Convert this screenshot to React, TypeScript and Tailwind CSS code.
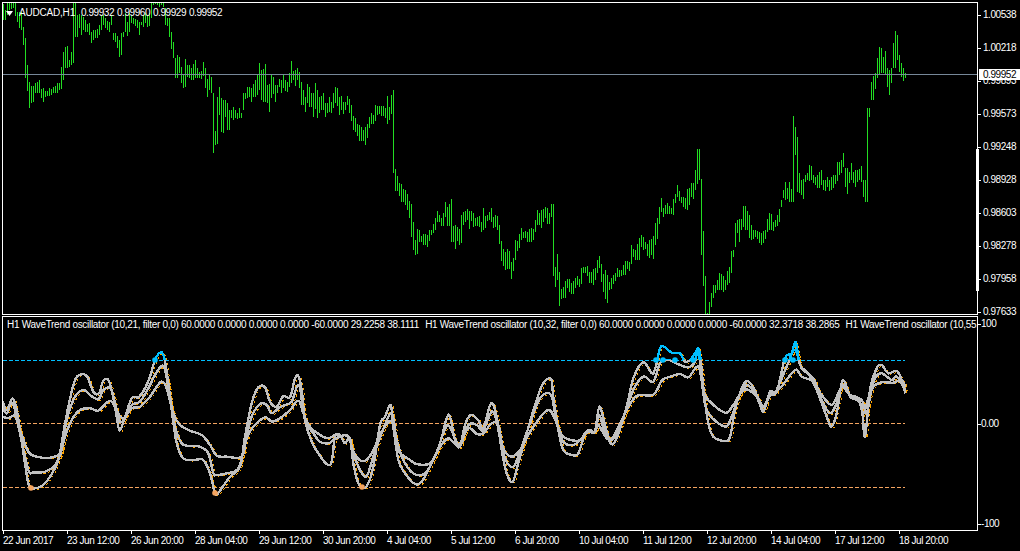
const seg1 = [
  [12,60],[30,60],[10,45],[10,30],[8,28],[8,25],[10,48],[35,65],[35,85],[35,90],
  [80,135],[115,235],[195,272],[245,323],[258,310],[258,305],[250,280],[245,280],[240,278],[268,295],
  [265,305],[272,290],[272,288],[265,288],[268,285],[262,280],[258,280],[250,280],[248,270],[200,268],
  [155,240],[140,205],[138,205],[180,200],[155,195],[8,190],[8,112],[45,112],[42,85],[45,105],
  [50,90],[60,95],[72,95],[70,105],[95,130],[90,120],[90,115],[88,115],[75,105],[45,90],
  [45,75],[55,85],[62,90],[65,95],[45,75],[100,120],[100,125],[108,145],[120,170],[100,165],
  [95,112],[40,95],[65,108],[40,95],[45,70],[55,72],[58,78],[60,85],[65,105],[65,75],
  [45,80],[40,70],[45,80],[40,78],[8,55],[8,15],[8,12],[8,14],[8,20],[8,15],
  [8,22],[25,75],[55,78],[55,110],[95,148],[125,175],[175,235],[165,235],[170,218],[200,248],
  [225,265],[178,262],[195,232],[195,235],[205,240],[192,240],[180,235],[205,235],[215,235],[212,238],
  [185,228],[205,265],[238,290],[225,270],[230,280],[280,458],[392,435],[290,432],[262,345],[295,395],
  [300,398],[300,350],[310,390],[330,390],[330,355],[320,360],[330,355],[340,358],[325,355],[340,355],
  [280,330],[278,298],[262,295],[262,290],[265,305],[252,290],[240,290],[225,285],[190,270],[210,300],
  [208,305],[192,305],[255,310],[252,335],[225,295],[232,282],[255,305],[255,280],[238,262],[240,280],
  [225,265],[240,272],[245,275],[220,262],[183,250],[212,240],[210,258],[205,240],[215,265],[245,315],
  [270,315],[290,335],[252,310],[262,320],[280,320],[278,352],[250,328],[270,355],[290,340],[288,330],
  [280,330],[310,352],[310,340],[292,335],[305,340],[280,325],[262,310],[265,318],[290,345],
];

// y offset 80 in this one
const seg2 = [
  [48,90],[65,102],[65,90],[48,75],[57,100],[75,123],[108,150],[113,155],[132,167],[135,183],
  [140,183],[150,183],[140,195],[132,175],[110,145],[98,132],[105,133],[75,123],[78,105],[78,103],
  [78,108],[78,108],[84,115],[48,132],[80,120],[45,102],[30,278],[267,333],[288,333],[308,348],
  [312,365],[327,367],[330,375],[342,390],[363,415],[372,470],[426,510],[480,525],[447,522],[450,487],
  [468,487],[462,495],[462,495],[465,500],[450,483],[450,465],[432,458],[414,450],[393,427],[405,427],
  [414,438],[400,438],[366,412],[380,438],[372,438],[357,486],[437,486],[435,507],[441,483],[447,495],
  [405,489],[396,435],[393,427],[387,420],[393,447],[393,423],[399,441],[415,438],[411,438],[408,441],
  [426,456],[384,450],[408,444],[405,423],[396,420],[384,426],[411,444],[405,441],[408,450],[435,492],
  [483,543],[507,558],[516,570],[507,567],[513,567],[546,597],[534,573],[480,540],[483,513],[462,504],
  [444,480],[456,474],[453,474],[456,486],[447,486],[444,486],[447,480],[420,456],[390,435],[399,435],
  [390,444],[387,426],[381,414],[384,432],[400,432],[372,411],[372,588],[561,621],[522,600],[576,678],
  [627,657],[621,654],[603,654],[597,624],[597,636],[609,642],[603,642],[594,624],[588,615],[597,621],
  [564,612],[561,579],[561,579],[558,588],[576,609],[576,609],[567,615],[564,600],[540,579],[528,564],
  [552,606],[582,636],[570,657],[585,669],[606,630],[594,627],[585,612],[579,603],[564,591],[570,591],
  [570,588],[555,585],[543,585],[543,567],[546,573],[495,552],[507,531],[510,540],[492,540],[474,540],
  [465,501],[471,510],[486,507],[492,528],[480,534],[477,525],[468,537],[429,495],[414,477],[381,432],
  [354,396],[384,411],[375,402],[369,402],[378,402],[384,402],[357,405],[342,369],[315,351],[333,363],
];

const seg3 = [
  [591,609],[591,621],[594,627],[567,630],[565,615],[549,590],[549,597],[510,570],[447,552],[447,540],
  [537,765],[693,858],[828,945],[940,960],[905,945],[880,920],[855,895],[855,880],[840,870],[819,870],
  [822,870],[828,875],[840,870],[813,855],[800,850],[753,820],[750,770],[669,740],[660,700],[657,726],
  [657,690],[618,680],[618,690],[633,690],[645,715],[675,720],[690,716],[690,712],[692,718],[695,730],
  [700,735],[692,730],[690,718],[657,695],[640,690],[642,690],[665,693],[660,680],[645,678],[627,665],
  [600,622],[570,595],[546,600],[565,598],[545,605],[568,605],[348,605],[380,465],[410,575],[520,580],
  [540,585],[537,597],[525,545],[518,540],[495,543],[498,540],[525,550],[530,555],[525,565],[515,565],
  [510,555],[540,570],[540,572],[530,560],[540,572],[532,570],[525,565],[526,553],[485,543],[485,525],
  [480,520],[458,500],[505,560],[505,582],[515,550],[490,540],[515,548],[510,560],[510,545],[507,540],
  [497,545],[540,590],[540,605],[325,605],[325,350],[245,300],[228,300],[218,268],[173,233],[140,225],
  [145,220],[172,218],[152,222],[205,260],[210,285],[205,250],[128,205],[93,205],[105,180],[165,215],
  [190,230],[205,243],[218,235],
];

function barPath() {
  const d: string[] = [];
  const add = (rows: number[][], startX: number, yOff: number) => {
    rows.forEach(([t, b], i) => {
      const x = startX + i * 2 + 0.5;
      d.push(`M${x} ${Math.round(yOff + t / 3)}V${Math.round(yOff + b / 3)}`);
    });
  };
  add(seg1, 3, 0);
  add(seg2, 341, 80);
  add(seg3, 681, 0);
  return d.join("");
}

// oscillator points, read off in 3x crops: [x, y] with x offset per crop and y = 310 + y/3
type Pts = number[][];
const crop = (pts: Pts, off: number) => pts.map(([x, y]) => [off + x / 3, 310 + y / 3]);

const outer = [
  ...crop([[8,275],[20,300],[38,265],[50,300],[60,360],[72,440],[85,520],[95,535],[125,528],[150,500],[175,450],[190,370],[205,290],[225,210],[245,193],[262,200],[280,245],[297,250],[310,212],[328,215],[345,290],[358,360],[372,330],[395,265],[415,262],[435,235],[450,200],[465,150],[480,128],[492,140],[505,220],[515,300],[530,400],[550,445],[580,450],[610,450],[630,490],[640,530],[648,555],[665,535],[690,500],[720,470],[735,380],[755,280],[775,232],[795,232],[810,275],[830,290],[850,258],[870,262],[885,205],[895,198],[905,240],[915,330],[935,395],[955,430],[980,462],[995,455],[1005,380]], 0),
  ...crop([[0,375],[15,400],[30,385],[40,460],[55,520],[70,535],[85,520],[100,470],[120,345],[135,320],[152,285],[160,350],[175,450],[195,490],[225,522],[245,515],[270,470],[300,400],[320,325],[330,320],[345,390],[360,410],[375,345],[392,315],[415,330],[430,355],[453,280],[470,320],[485,420],[500,490],[518,515],[535,460],[560,370],[590,270],[610,220],[633,207],[640,260],[655,360],[670,420],[695,435],[715,430],[735,370],[750,360],[765,365],[778,290],[795,345],[812,400],[830,385],[860,290],[880,205],[910,157],[940,190],[960,115],[975,112],[995,128]], 340),
  ...crop([[0,130],[15,155],[30,150],[45,130],[55,115],[62,150],[72,250],[85,340],[100,380],[135,393],[150,380],[165,300],[185,235],[200,213],[215,225],[235,265],[250,305],[270,245],[290,245],[315,145],[335,130],[347,97],[360,165],[385,190],[410,240],[440,320],[455,350],[470,310],[488,212],[510,260],[530,270],[545,290],[555,380],[570,240],[590,175],[605,165],[625,190],[650,183],[665,210],[676,250]], 680),
];

const mid = [
  ...crop([[8,290],[20,310],[38,280],[60,370],[85,480],[100,487],[135,485],[165,465],[185,420],[200,330],[225,260],[250,240],[270,255],[295,268],[310,240],[333,237],[350,300],[360,335],[375,325],[395,285],[420,275],[445,235],[465,195],[485,168],[495,180],[510,260],[525,350],[545,400],[570,408],[600,410],[625,430],[640,490],[650,495],[680,490],[715,475],[735,400],[755,320],[780,282],[800,285],[815,310],[835,295],[855,285],[875,275],[890,232],[900,235],[915,330],[940,370],[960,395],[985,400],[1000,390]], 0),
  ...crop([[0,380],[25,378],[40,430],[60,480],[80,498],[100,440],[125,370],[155,310],[170,390],[190,450],[220,490],[255,490],[285,440],[310,370],[325,345],[345,385],[360,410],[385,345],[410,345],[430,360],[455,305],[470,335],[490,430],[515,472],[535,440],[570,340],[600,265],[633,255],[650,340],[670,395],[700,405],[725,385],[740,365],[765,365],[778,315],[795,370],[815,390],[840,350],[880,240],[910,200],[940,215],[960,160],[985,150]], 340),
  ...crop([[0,165],[25,172],[45,155],[55,118],[70,250],[85,310],[135,350],[155,320],[175,265],[200,225],[225,250],[250,300],[270,250],[285,250],[320,170],[345,120],[365,175],[400,205],[425,270],[450,310],[470,280],[488,225],[510,255],[535,265],[550,310],[565,265],[585,205],[605,190],[635,210],[650,200],[676,240]], 680),
];

const inner = [
  ...crop([[8,320],[25,325],[45,318],[60,360],[85,425],[110,440],[150,443],[180,430],[195,380],[215,330],[240,300],[270,295],[295,302],[320,278],[335,275],[355,310],[370,325],[395,295],[420,290],[450,260],[470,230],[485,215],[500,235],[520,310],[540,345],[570,362],[605,375],[630,405],[650,437],[680,440],[725,440],[740,385],[760,350],[795,322],[815,335],[840,325],[870,300],[895,272],[910,310],[930,350],[960,375],[985,385],[1005,375]], 0),
  ...crop([[0,378],[25,380],[45,435],[75,453],[100,420],[125,365],[155,335],[175,420],[210,450],[230,462],[270,460],[300,410],[325,385],[355,405],[385,355],[410,372],[430,370],[455,340],[475,345],[490,415],[515,440],[540,420],[580,350],[625,300],[650,340],[670,380],[715,392],[740,368],[765,365],[775,345],[800,385],[820,380],[860,300],[890,258],[940,254],[965,212],[985,202]], 340),
  ...crop([[0,192],[25,202],[55,170],[70,240],[85,270],[135,308],[160,285],[185,245],[205,240],[235,265],[250,290],[270,258],[300,235],[345,180],[365,200],[400,215],[425,255],[455,285],[475,250],[488,230],[510,255],[545,270],[560,310],[575,240],[600,218],[640,218],[665,210],[676,230]], 680),
];

// catmull-rom through the read points
function smooth(pts: Pts) {
  let d = `M${pts[0][0]} ${pts[0][1]}`;
  for (let i = 0; i < pts.length - 1; i++) {
    const p0 = pts[Math.max(i - 1, 0)];
    const p1 = pts[i];
    const p2 = pts[i + 1];
    const p3 = pts[Math.min(i + 2, pts.length - 1)];
    const c1x = p1[0] + (p2[0] - p0[0]) / 6;
    const c1y = p1[1] + (p2[1] - p0[1]) / 6;
    const c2x = p2[0] - (p3[0] - p1[0]) / 6;
    const c2y = p2[1] - (p3[1] - p1[1]) / 6;
    d += `C${c1x.toFixed(1)} ${c1y.toFixed(1)} ${c2x.toFixed(1)} ${c2y.toFixed(1)} ${p2[0].toFixed(1)} ${p2[1].toFixed(1)}`;
  }
  return d;
}

const prices = ["1.00538", "1.00218", "0.99893", "0.99573", "0.99248", "0.98928", "0.98603", "0.98278", "0.97958", "0.97633"];
const osc = ["100", "0.00", "-100"];
const times = [
  "22 Jun 2017", "23 Jun 12:00", "26 Jun 20:00", "28 Jun 04:00", "29 Jun 12:00",
  "30 Jun 20:00", "4 Jul 04:00", "5 Jul 12:00", "6 Jul 20:00", "10 Jul 04:00",
  "11 Jul 12:00", "12 Jul 20:00", "14 Jul 04:00", "17 Jul 12:00", "18 Jul 20:00",
];

const lines = [outer, mid, inner].map(smooth);
const blueDots = [[155, 360], [656, 360], [663, 360], [675, 360], [693, 360], [785, 360], [793, 360]];
const orangeDots = [[31, 488], [215, 493], [362, 487]];

function PriceChart() {
  return (
    <svg viewBox="3 3 974 311" className="block h-full w-full" shapeRendering="crispEdges">
      <path d={barPath()} stroke="#22dd22" strokeWidth={1} fill="none" />
      <rect x={3} y={74} width={974} height={1} fill="#778899" />
    </svg>
  );
}

function Oscillator() {
  return (
    <svg viewBox="3 317 974 213" className="block h-full w-full" shapeRendering="crispEdges">
      <defs>
        <clipPath id="above60">
          <rect x={3} y={317} width={974} height={43} />
        </clipPath>
      </defs>
      <path d="M3 360.5H905" stroke="#00bfff" strokeDasharray="4 2" />
      <path d="M3 423.5H905" stroke="#f4a460" strokeDasharray="4 2" />
      <path d="M3 487.5H905" stroke="#f4a460" strokeDasharray="4 2" />
      {lines.map((d, i) => (
        <path key={i} d={d} transform="translate(2 1)" stroke="#ffa500" strokeDasharray="2 3" fill="none" />
      ))}
      {lines.map((d, i) => (
        <path key={i} d={d} stroke="#c0c0c0" strokeWidth={2.4} fill="none" />
      ))}
      <g clipPath="url(#above60)">
        {lines.map((d, i) => (
          <path key={i} d={d} stroke="#00bfff" strokeWidth={2.4} fill="none" />
        ))}
      </g>
      <g shapeRendering="auto">
        {blueDots.map(([x, y]) => (
          <circle key={x} cx={x} cy={y} r={2.8} fill="#00bfff" />
        ))}
        {orangeDots.map(([x, y]) => (
          <circle key={x} cx={x} cy={y} r={2.8} fill="#f4a460" />
        ))}
      </g>
    </svg>
  );
}

export default function App() {
  return (
    <div className="flex h-[551px] w-[1020px] flex-col overflow-hidden bg-black pt-[2px] font-['Liberation_Sans',sans-serif] text-[10px] leading-[10px] tracking-[-0.45px] text-white">
      <div className="flex h-[313px] pl-[2px]">
        <div className="relative h-full w-[976px] border border-white">
          <PriceChart />
          <div className="absolute left-[3px] top-[5px] flex items-center gap-[6px]">
            <svg width="7" height="5" viewBox="0 0 7 5" className="block">
              <path d="M0 0H7L3.5 5Z" fill="#fff" />
            </svg>
            <span className="tracking-[-0.2px]">AUDCAD,H1</span>
            <span className="flex gap-[3px]">
              <span>0.99932</span>
              <span>0.99960</span>
              <span>0.99929</span>
              <span>0.99952</span>
            </span>
          </div>
        </div>
        <div className="relative flex w-[42px] flex-col gap-[23px] pt-[8px]">
          {prices.map((p) => (
            <div key={p} className="flex h-[10px] items-center">
              <span className="h-px w-[3px] bg-white" />
              <span className="ml-[2px]">{p}</span>
            </div>
          ))}
          <span className="absolute left-[-2px] top-[147px] h-[142px] w-[3px] bg-white" />
          <span className="absolute left-[1px] top-[67px] flex h-[11px] w-[41px] items-center bg-white pl-[4px] text-black">
            0.99952
          </span>
        </div>
      </div>
      <div className="mt-px flex h-[215px] pl-[2px]">
        <div className="relative h-full w-[976px] overflow-hidden border border-white">
          <Oscillator />
          <div className="absolute left-[4px] top-[3px] flex gap-[6px] whitespace-nowrap tracking-[-0.3px]">
            <span>H1 WaveTrend oscillator (10,21, filter 0,0) 60.0000 0.0000 0.0000 0.0000 -60.0000 29.2258 38.1111</span>
            <span>H1 WaveTrend oscillator (10,32, filter 0,0) 60.0000 0.0000 0.0000 0.0000 -60.0000 32.3718 38.2865</span>
            <span>H1 WaveTrend oscillator (10,55,</span>
          </div>
        </div>
        <div className="flex w-[42px] flex-col gap-[90px] pt-[3px]">
          {osc.map((v) => (
            <div key={v} className="flex h-[10px] items-center">
              <span className="h-px w-[3px] bg-white" />
              <span>{v}</span>
            </div>
          ))}
        </div>
      </div>
      <div className="ml-[3px] grid grid-cols-[repeat(15,64px)]">
        {times.map((t) => (
          <div key={t} className="flex flex-col">
            <span className="h-[3px] w-px bg-white" />
            <span className="mt-[2px] whitespace-nowrap">{t}</span>
          </div>
        ))}
      </div>
    </div>
  );
}
